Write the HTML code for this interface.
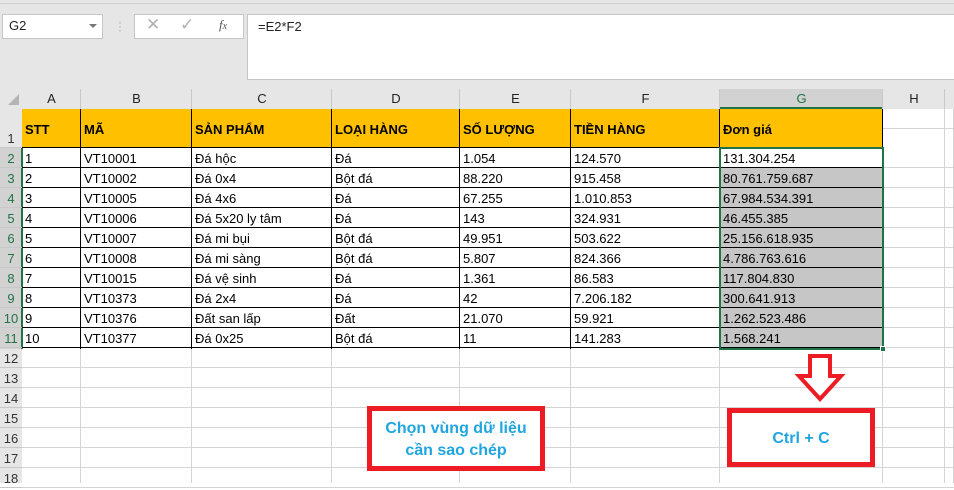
<!DOCTYPE html>
<html><head><meta charset="utf-8"><style>
*{margin:0;padding:0;box-sizing:border-box}
body{width:954px;height:483px;overflow:hidden;background:#fff;font-family:"Liberation Sans",sans-serif;position:relative}
.a{position:absolute}
.c{position:absolute;font-size:13px;color:#000;line-height:20px;padding-left:3px;white-space:nowrap;overflow:hidden}
.hl{position:absolute;background:#d4d4d4}
.bl{position:absolute;background:#000}
.ch{position:absolute;top:89px;height:20px;line-height:20px;text-align:center;font-size:13px;color:#222}
.rh{position:absolute;left:0;width:22px;height:20px;line-height:22px;text-align:center;font-size:13px;color:#333}
</style></head><body>
<div class="a" style="left:0;top:0;width:954px;height:89px;background:#e6e6e6"></div>
<div class="a" style="left:0;top:3px;width:954px;height:1px;background:#d0d0d0"></div>
<div class="a" style="left:2px;top:14px;width:101px;height:25px;background:#fff;border:1px solid #c6c6c6"></div>
<div class="a" style="left:9px;top:18px;font-size:13px;color:#222">G2</div>
<div class="a" style="left:89px;top:24px;width:0;height:0;border-left:4px solid transparent;border-right:4px solid transparent;border-top:4px solid #777"></div>
<div class="a" style="left:118px;top:20px;color:#aaa;font-size:12px;line-height:4px">·<br>·<br>·</div>
<div class="a" style="left:134px;top:14px;width:110px;height:25px;background:#fff;border:1px solid #c6c6c6"></div>
<div class="a" style="left:146px;top:15px;font-size:17px;color:#b0b0b0">✕</div>
<div class="a" style="left:180px;top:15px;font-size:17px;color:#b0b0b0">✓</div>
<div class="a" style="left:219px;top:17px;font-size:13px;color:#555;font-style:italic;font-family:'Liberation Serif',serif">f<span style="font-size:10px">x</span></div>
<div class="a" style="left:247px;top:14px;width:707px;height:66px;background:#fff;border:1px solid #c6c6c6;border-right:none"></div>
<div class="a" style="left:258px;top:19px;font-size:13px;color:#222">=E2*F2</div>

<div class="a" style="left:0;top:89px;width:954px;height:20px;background:#e6e6e6"></div>
<div class="a" style="left:0;top:89px;width:22px;height:394px;background:#e6e6e6"></div>
<div class="a" style="left:720px;top:89px;width:163px;height:20px;background:#d2d2d2;border-bottom:2px solid #217346"></div>
<div class="a" style="left:0;top:148px;width:22px;height:201px;background:#d2d2d2"></div>
<div class="a" style="left:21px;top:148px;width:2px;height:201px;background:#217346"></div>
<div class="a" style="left:8px;top:94px;width:0;height:0;border-left:11px solid transparent;border-bottom:11px solid #b5b5b5"></div>

<div class="a" style="left:22px;top:109px;width:861px;height:39px;background:#ffc000"></div>
<div class="a" style="left:720px;top:168px;width:163px;height:181px;background:#c6c6c6"></div>

<div id="g"></div>

<div class="a" style="left:367px;top:406px;width:178px;height:65px;border:5px solid #ed1c24;background:#fff"></div>
<div class="a" style="left:367px;top:418px;width:178px;text-align:center;font-size:16px;font-weight:bold;color:#1fa5e0;line-height:22px">Chọn vùng dữ liệu<br>cần sao chép</div>
<div class="a" style="left:727px;top:408px;width:148px;height:59px;border:5px solid #ed1c24;background:#fff"></div>
<div class="a" style="left:727px;top:430px;width:148px;text-align:center;font-size:16px;font-weight:bold;color:#1fa5e0">Ctrl + C</div>
<svg class="a" style="left:790px;top:350px" width="60" height="56"><path d="M20 6 H40 V26 H51 L30 49 L9 26 H20 Z" fill="#fff" stroke="#ed1c24" stroke-width="4" stroke-linejoin="miter"/></svg>

<script>
var cols=[22,81,192,332,460,571,720,883,945,954];
var letters="ABCDEFGH";
var g=document.getElementById('g'),h='';
for(var i=0;i<8;i++){h+='<div class="ch" style="left:'+cols[i]+'px;width:'+(cols[i+1]-cols[i])+'px;'+(i==6?'color:#217346':'')+'">'+letters[i]+'</div>';
h+='<div class="hl" style="left:'+(cols[i+1]-1)+'px;top:89px;width:1px;height:20px;background:#c8c8c8"></div>';}
var tops=[109,148];for(var r=2;r<=19;r++)tops.push(148+(r-1)*20);
for(var r=1;r<=18;r++){var b=tops[r];
h+='<div class="rh" style="top:'+(b-20)+'px;'+(r>=2&&r<=11?'color:#217346':'')+'">'+r+'</div>';
h+='<div class="hl" style="left:0;top:'+(b-1)+'px;width:22px;height:1px;background:#c8c8c8"></div>';}
for(var r=12;r<=19;r++){h+='<div class="hl" style="left:22px;top:'+(tops[r-1]-1)+'px;width:932px;height:1px"></div>';}
h+='<div class="hl" style="left:883px;top:128px;width:71px;height:1px"></div>';
for(var r=2;r<=11;r++)h+='<div class="hl" style="left:883px;top:'+(tops[r]-1)+'px;width:71px;height:1px"></div>';
for(var i=0;i<9;i++){h+='<div class="hl" style="left:'+(cols[i+1]-1)+'px;top:109px;width:1px;height:374px"></div>';}
for(var i=0;i<7;i++)h+='<div class="bl" style="left:'+(cols[i+1]-1)+'px;top:109px;width:1px;height:240px"></div>';
for(var r=1;r<=11;r++)h+='<div class="bl" style="left:22px;top:'+(tops[r]-1)+'px;width:861px;height:1px"></div>';
var d=[["STT","MÃ","SẢN PHẨM","LOẠI HÀNG","SỐ LƯỢNG","TIỀN HÀNG","Đơn giá"],
["1","VT10001","Đá hộc","Đá","1.054","124.570","131.304.254"],
["2","VT10002","Đá 0x4","Bột đá","88.220","915.458","80.761.759.687"],
["3","VT10005","Đá 4x6","Đá","67.255","1.010.853","67.984.534.391"],
["4","VT10006","Đá 5x20 ly tâm","Đá","143","324.931","46.455.385"],
["5","VT10007","Đá mi bụi","Bột đá","49.951","503.622","25.156.618.935"],
["6","VT10008","Đá mi sàng","Bột đá","5.807","824.366","4.786.763.616"],
["7","VT10015","Đá vệ sinh","Đá","1.361","86.583","117.804.830"],
["8","VT10373","Đá 2x4","Đá","42","7.206.182","300.641.913"],
["9","VT10376","Đất san lấp","Đất","21.070","59.921","1.262.523.486"],
["10","VT10377","Đá 0x25","Bột đá","11","141.283","1.568.241"]];
for(var r=0;r<11;r++)for(var i=0;i<7;i++){
var yy=r==0?121:tops[r]+2; var st=r==0?'font-weight:bold;':'';
h+='<div class="c" style="left:'+cols[i]+'px;top:'+yy+'px;width:'+(cols[i+1]-cols[i])+'px;height:18px;line-height:18px;'+st+'">'+d[r][i]+'</div>';}
h+='<div class="a" style="left:719px;top:147px;width:165px;height:203px;border:2px solid #217346"></div>';
h+='<div class="a" style="left:880px;top:346px;width:6px;height:6px;background:#217346;border:1px solid #fff"></div>';
g.innerHTML=h;
</script>
</body></html>
